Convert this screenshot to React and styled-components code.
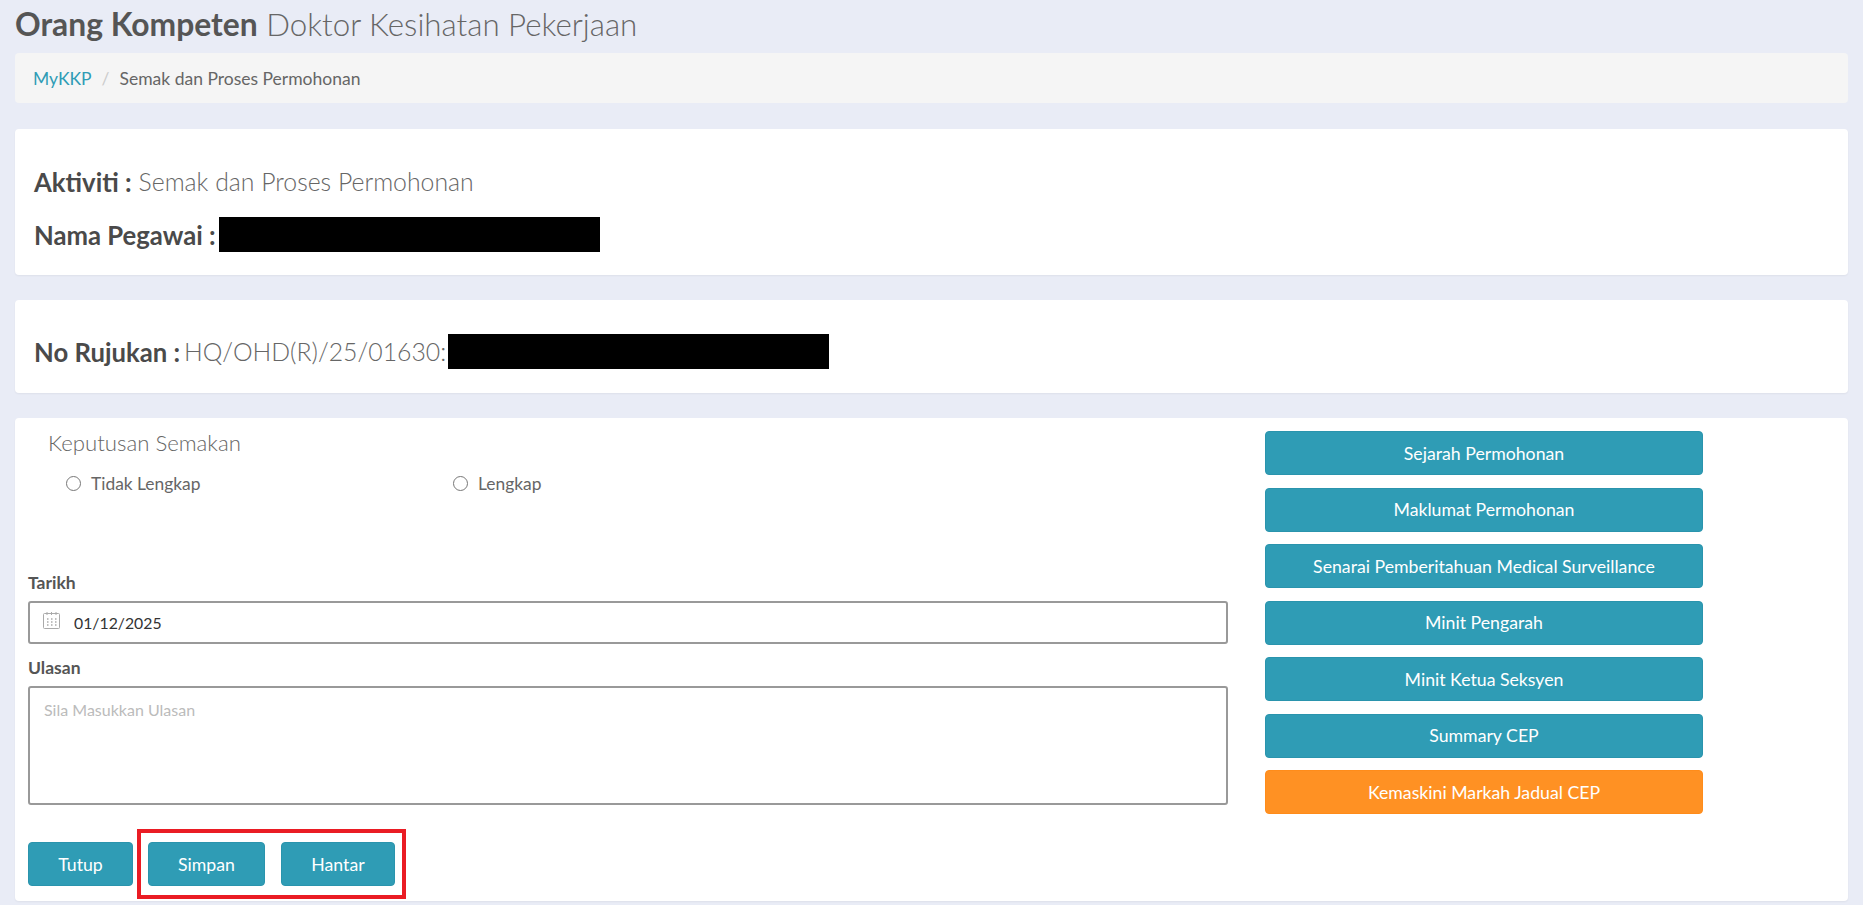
import styled, { createGlobalStyle } from "styled-components";

const GlobalStyle = createGlobalStyle`
  * {
    box-sizing: border-box;
  }
  body {
    margin: 0;
    background: #e9ecf6;
    font-family: Lato, "Liberation Sans", sans-serif;
    color: #555;
  }
`;

const Page = styled.div`
  padding: 0 15px 4px;
`;

const PageTitle = styled.h1`
  margin: 0;
  height: 53px;
  font-size: 31.3px;
  line-height: 48px;
  font-weight: 300;
  color: #666;
  strong {
    font-size: 31.8px;
    font-weight: 700;
    color: #555;
  }
`;

const Breadcrumb = styled.div`
  display: flex;
  align-items: center;
  height: 50px;
  margin-bottom: 26px;
  padding: 0 18px;
  background: #f5f5f5;
  border-radius: 4px;
  font-size: 17.5px;
  color: #666;
  a {
    color: #2f9cb5;
    text-decoration: none;
  }
  span {
    margin: 0 10px;
    color: #ccc;
  }
`;

const Card = styled.section`
  background: #fff;
  border-radius: 4px;
  box-shadow: 0 1px 2px rgba(0, 0, 0, 0.05);
  margin-bottom: 25px;
  &:last-child {
    margin-bottom: 0;
  }
`;

const InfoCard = styled(Card)`
  display: flex;
  flex-direction: column;
  height: ${(p) => p.$height}px;
  padding: ${(p) => p.$top}px 20px 0 19px;
`;

const InfoRow = styled.div`
  display: flex;
  align-items: center;
  height: 35px;
  margin-top: ${(p) => p.$shift || 0}px;
  margin-bottom: ${(p) => 16 - (p.$shift || 0)}px;
  font-size: 24.8px;
  font-weight: 300;
  color: #666;
  strong {
    font-size: 25.7px;
    font-weight: 700;
    color: #4a4a4a;
    margin-right: ${(p) => p.$gap}px;
  }
`;

const Redacted = styled.span`
  display: block;
  width: 381px;
  height: 35px;
  background: #000;
  margin-left: ${(p) => p.$gap}px;
`;

const FormCard = styled(Card)`
  position: relative;
  display: flex;
  height: 483px;
  padding-left: 13px;
`;

const LeftColumn = styled.div`
  width: 1200px;
  padding-top: 10px;
`;

const SectionTitle = styled.div`
  padding-left: 20px;
  font-size: 22.2px;
  line-height: 30px;
  font-weight: 300;
  color: #666;
`;

const RadioGroup = styled.div`
  display: grid;
  grid-template-columns: 387px 387px;
  height: 103px;
  margin-top: 12px;
  padding-left: 38px;
`;

const RadioLabel = styled.label`
  display: flex;
  align-items: center;
  gap: 10px;
  height: 26px;
  font-size: 17.4px;
  color: #666;
`;

const Radio = styled.input.attrs({ type: "radio" })`
  appearance: none;
  width: 15px;
  height: 15px;
  margin: 0;
  border: 1.5px solid #777;
  border-radius: 50%;
  background: #fff;
`;

const FieldLabel = styled.label`
  display: block;
  height: 20px;
  margin-bottom: 8px;
  font-size: 17.5px;
  line-height: 20px;
  font-weight: 700;
  color: #555;
`;

const DateField = styled.div`
  display: flex;
  align-items: center;
  gap: 13px;
  height: 43px;
  margin-bottom: 14px;
  padding-left: 12px;
  border: 2px solid #999;
  border-radius: 3px;
  svg {
    flex: none;
    margin-top: -4px;
  }
`;

const DateInput = styled.input`
  flex: 1;
  border: 0;
  outline: 0;
  padding: 0;
  font-family: inherit;
  font-size: 15.8px;
  color: #333;
`;

const NotesInput = styled.textarea`
  display: block;
  width: 100%;
  height: 119px;
  padding: 12px 14px;
  border: 2px solid #999;
  border-radius: 3px;
  outline: 0;
  resize: none;
  font-family: inherit;
  font-size: 16px;
  &::placeholder {
    color: #bbb;
  }
`;

const Actions = styled.div`
  display: flex;
  margin-top: 37px;
`;

const Button = styled.button`
  height: 44px;
  border: 1px solid ${(p) => (p.$warning ? "#ff8c1a" : "#2a94ad")};
  border-radius: 4px;
  background: ${(p) => (p.$warning ? "#ff9123" : "#2f9cb5")};
  color: #fff;
  font-family: inherit;
  font-size: 17.7px;
  padding: 0;
`;

const ActionButton = styled(Button)`
  width: ${(p) => p.$width}px;
  margin-right: ${(p) => p.$gap}px;
`;

const Highlight = styled.div`
  position: absolute;
  left: 122px;
  top: 411px;
  width: 269px;
  height: 70px;
  border: 4px solid #ea1c24;
`;

const SideColumn = styled.div`
  display: flex;
  flex-direction: column;
  gap: 12.5px;
  width: 438px;
  margin-left: 37px;
  padding-top: 13px;
`;

const sideLinks = [
  "Sejarah Permohonan",
  "Maklumat Permohonan",
  "Senarai Pemberitahuan Medical Surveillance",
  "Minit Pengarah",
  "Minit Ketua Seksyen",
  "Summary CEP",
];

const CalendarIcon = () => (
  <svg width="19" height="19" viewBox="0 0 19 19" fill="none" stroke="#aaa" strokeWidth="1">
    <rect x="1.5" y="2.5" width="16" height="15" rx="1" />
    <path d="M5 1v3M9.5 1v3M14 1v3" />
    <path d="M5 8h1.5M9 8h1.5M13 8h1.5M5 11h1.5M9 11h1.5M13 11h1.5M5 14h1.5M9 14h1.5M13 14h1.5" strokeWidth="1.4" />
  </svg>
);

const App = () => (
  <Page>
    <GlobalStyle />
    <PageTitle>
      <strong>Orang Kompeten</strong> Doktor Kesihatan Pekerjaan
    </PageTitle>
    <Breadcrumb>
      <a href="#">MyKKP</a>
      <span>/</span>
      Semak dan Proses Permohonan
    </Breadcrumb>
    <InfoCard $height={146} $top={37}>
      <InfoRow $gap={7} $shift={-2}>
        <strong>Aktiviti :</strong> Semak dan Proses Permohonan
      </InfoRow>
      <InfoRow $gap={3}>
        <strong>Nama Pegawai :</strong>
        <Redacted $gap={0} />
      </InfoRow>
    </InfoCard>
    <InfoCard $height={93} $top={34}>
      <InfoRow $gap={4}>
        <strong>No Rujukan :</strong> HQ/OHD(R)/25/01630:
        <Redacted $gap={2} />
      </InfoRow>
    </InfoCard>
    <FormCard>
      <LeftColumn>
        <SectionTitle>Keputusan Semakan</SectionTitle>
        <RadioGroup>
          <RadioLabel>
            <Radio name="keputusan" />
            Tidak Lengkap
          </RadioLabel>
          <RadioLabel>
            <Radio name="keputusan" />
            Lengkap
          </RadioLabel>
        </RadioGroup>
        <FieldLabel>Tarikh</FieldLabel>
        <DateField>
          <CalendarIcon />
          <DateInput defaultValue="01/12/2025" />
        </DateField>
        <FieldLabel>Ulasan</FieldLabel>
        <NotesInput placeholder="Sila Masukkan Ulasan" />
        <Actions>
          <ActionButton $width={105} $gap={15}>Tutup</ActionButton>
          <ActionButton $width={117} $gap={16}>Simpan</ActionButton>
          <ActionButton $width={114} $gap={0}>Hantar</ActionButton>
        </Actions>
      </LeftColumn>
      <SideColumn>
        {sideLinks.map((label) => (
          <Button key={label}>{label}</Button>
        ))}
        <Button $warning>Kemaskini Markah Jadual CEP</Button>
      </SideColumn>
      <Highlight />
    </FormCard>
  </Page>
);

export default App;
